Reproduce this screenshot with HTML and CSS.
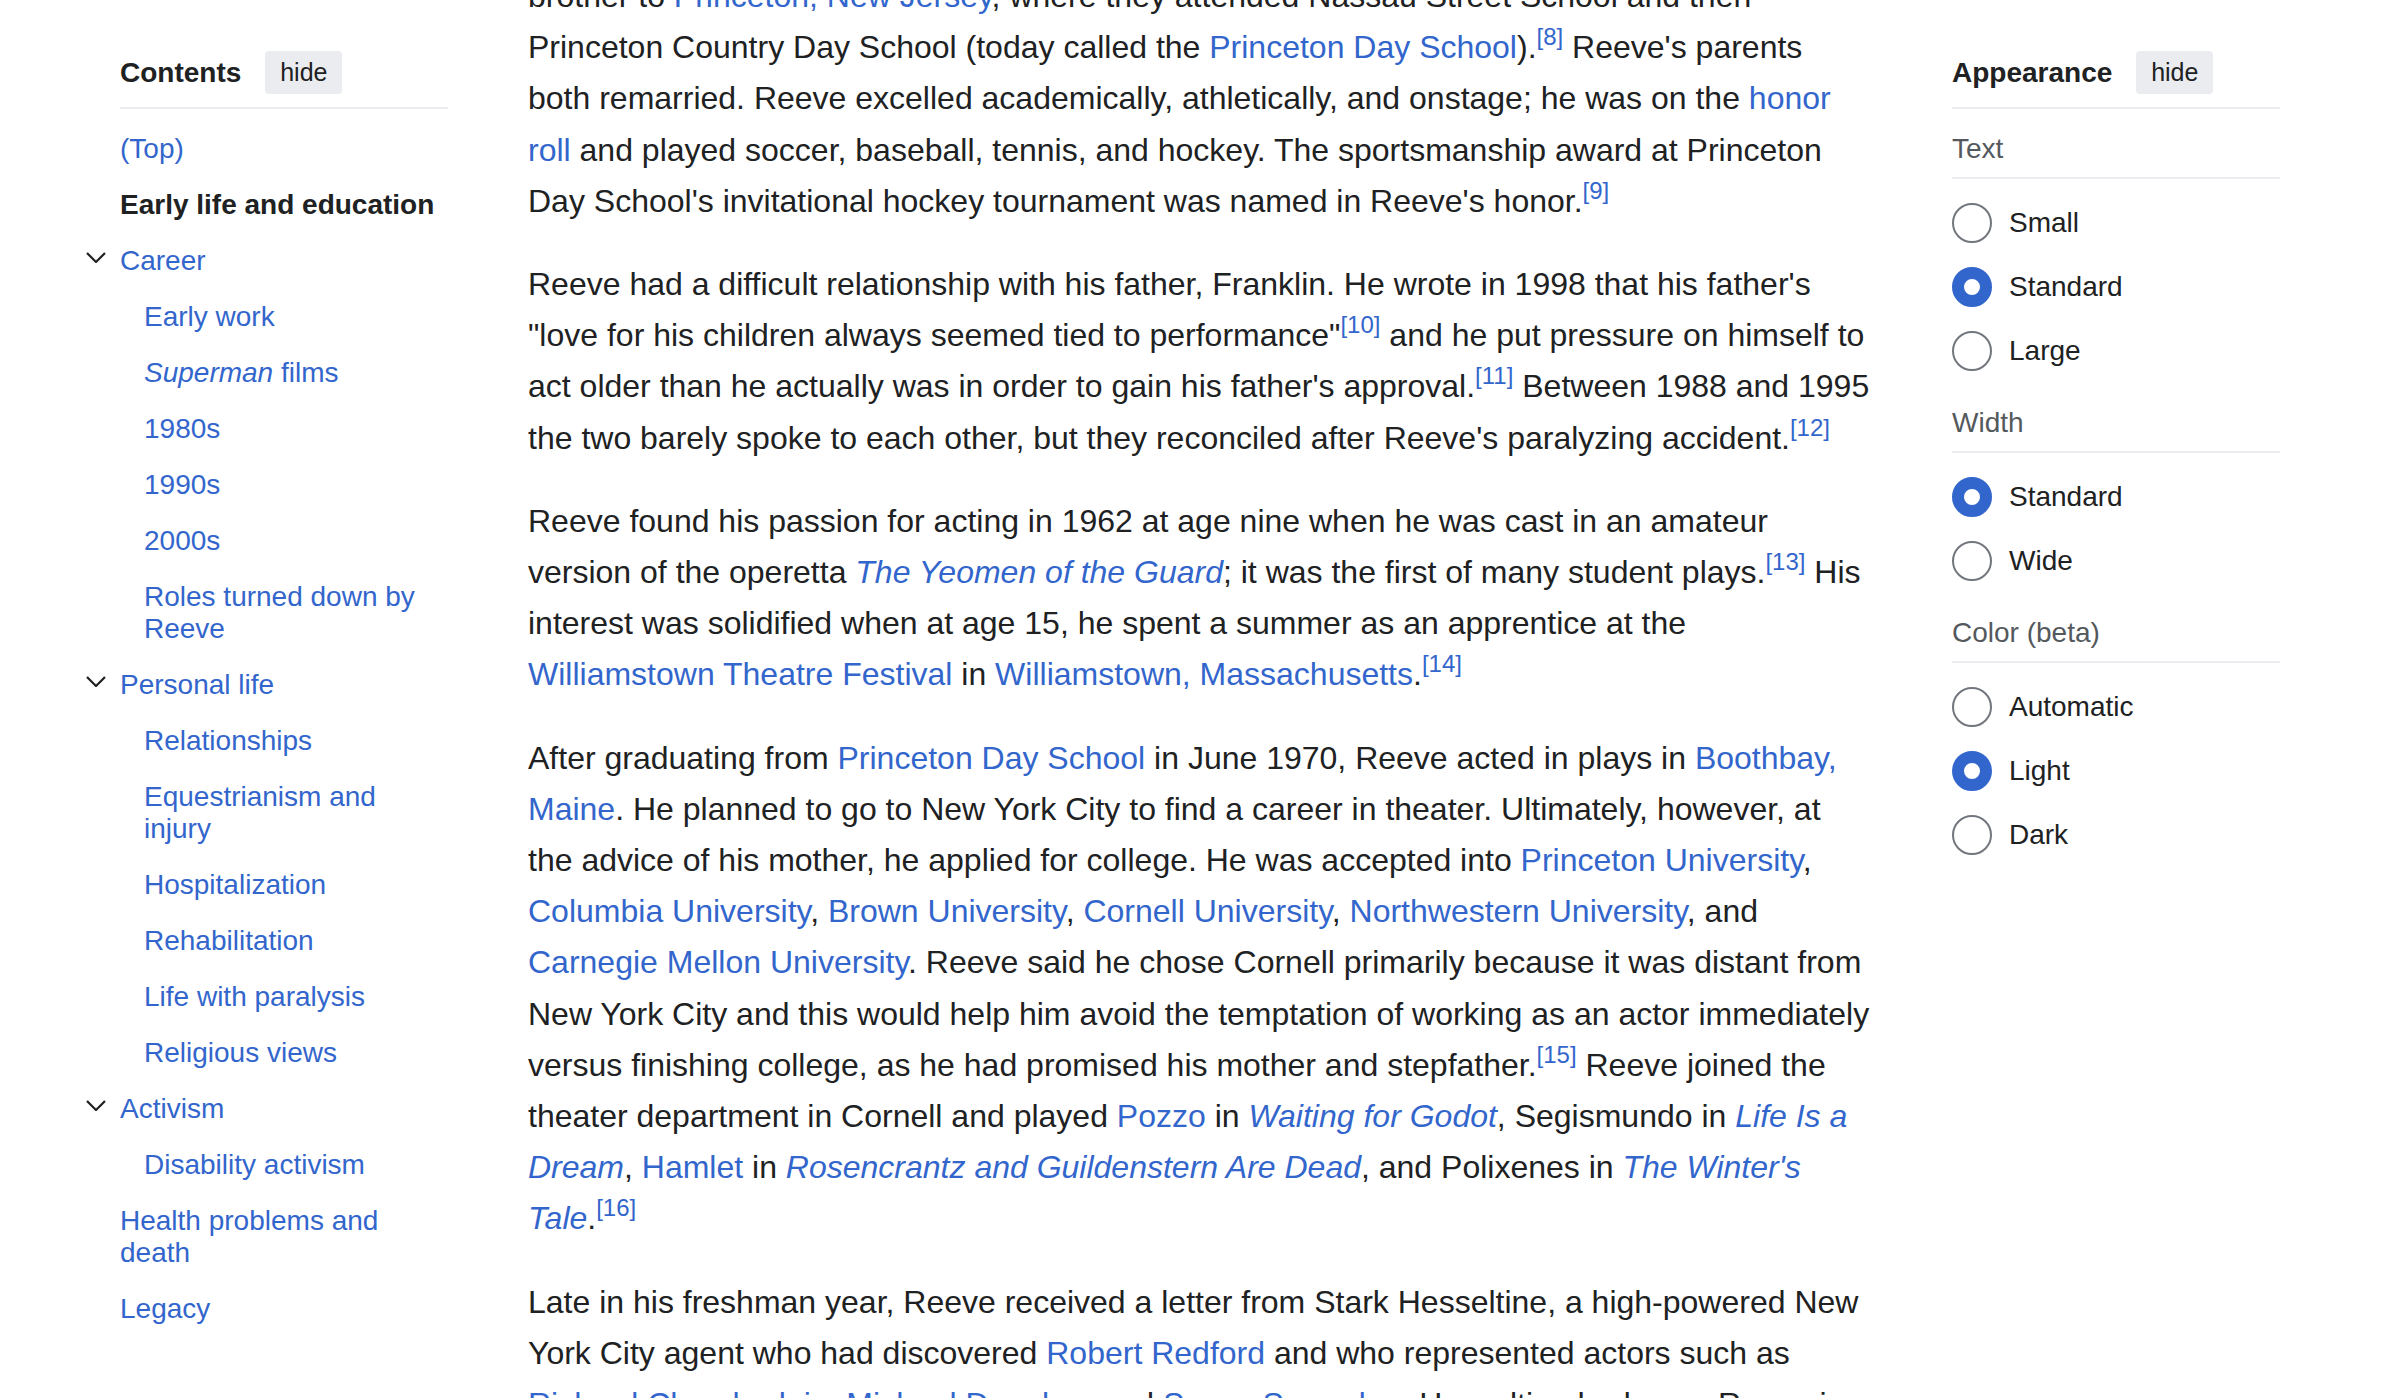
FILE: index.html
```html
<!DOCTYPE html>
<html lang="en">
<head>
<meta charset="utf-8">
<title>Christopher Reeve</title>
<link rel="stylesheet" href="styles.css">
</head>
<body>
<div class="page">
  <nav class="toc">
    <div class="panel-head">
      <span class="panel-title">Contents</span>
      <button class="hide-btn">hide</button>
    </div>
    <ul class="toc-list">
      <li class="toc-item"><a href="#">(Top)</a></li>
      <li class="toc-item active"><a href="#">Early life and education</a></li>
      <li class="toc-item has-sub">
        <svg class="chev" viewBox="0 0 20 11" width="20" height="11"><polyline points="1,1 10,10 19,1"/></svg>
        <a href="#">Career</a>
        <ul class="toc-sub">
          <li class="toc-item"><a href="#">Early work</a></li>
          <li class="toc-item"><a href="#"><i>Superman</i> films</a></li>
          <li class="toc-item"><a href="#">1980s</a></li>
          <li class="toc-item"><a href="#">1990s</a></li>
          <li class="toc-item"><a href="#">2000s</a></li>
          <li class="toc-item"><a href="#">Roles turned down by Reeve</a></li>
        </ul>
      </li>
      <li class="toc-item has-sub">
        <svg class="chev" viewBox="0 0 20 11" width="20" height="11"><polyline points="1,1 10,10 19,1"/></svg>
        <a href="#">Personal life</a>
        <ul class="toc-sub">
          <li class="toc-item"><a href="#">Relationships</a></li>
          <li class="toc-item"><a href="#">Equestrianism and injury</a></li>
          <li class="toc-item"><a href="#">Hospitalization</a></li>
          <li class="toc-item"><a href="#">Rehabilitation</a></li>
          <li class="toc-item"><a href="#">Life with paralysis</a></li>
          <li class="toc-item"><a href="#">Religious views</a></li>
        </ul>
      </li>
      <li class="toc-item has-sub">
        <svg class="chev" viewBox="0 0 20 11" width="20" height="11"><polyline points="1,1 10,10 19,1"/></svg>
        <a href="#">Activism</a>
        <ul class="toc-sub">
          <li class="toc-item"><a href="#">Disability activism</a></li>
        </ul>
      </li>
      <li class="toc-item"><a href="#">Health problems and death</a></li>
      <li class="toc-item"><a href="#">Legacy</a></li>
    </ul>
  </nav>

  <main class="article">
    <p>brother to <a href="#">Princeton, New Jersey</a>, where they attended Nassau Street School and then<br>
    Princeton Country Day School (today called the <a href="#">Princeton Day School</a>).<sup><a href="#">[8]</a></sup> Reeve's parents<br>
    both remarried. Reeve excelled academically, athletically, and onstage; he was on the <a href="#">honor<br>
    roll</a> and played soccer, baseball, tennis, and hockey. The sportsmanship award at Princeton<br>
    Day School's invitational hockey tournament was named in Reeve's honor.<sup><a href="#">[9]</a></sup></p>

    <p>Reeve had a difficult relationship with his father, Franklin. He wrote in 1998 that his father's<br>
    "love for his children always seemed tied to performance"<sup><a href="#">[10]</a></sup> and he put pressure on himself to<br>
    act older than he actually was in order to gain his father's approval.<sup><a href="#">[11]</a></sup> Between 1988 and 1995<br>
    the two barely spoke to each other, but they reconciled after Reeve's paralyzing accident.<sup><a href="#">[12]</a></sup></p>

    <p>Reeve found his passion for acting in 1962 at age nine when he was cast in an amateur<br>
    version of the operetta <a href="#"><i>The Yeomen of the Guard</i></a>; it was the first of many student plays.<sup><a href="#">[13]</a></sup> His<br>
    interest was solidified when at age 15, he spent a summer as an apprentice at the<br>
    <a href="#">Williamstown Theatre Festival</a> in <a href="#">Williamstown, Massachusetts</a>.<sup><a href="#">[14]</a></sup></p>

    <p>After graduating from <a href="#">Princeton Day School</a> in June 1970, Reeve acted in plays in <a href="#">Boothbay,<br>
    Maine</a>. He planned to go to New York City to find a career in theater. Ultimately, however, at<br>
    the advice of his mother, he applied for college. He was accepted into <a href="#">Princeton University</a>,<br>
    <a href="#">Columbia University</a>, <a href="#">Brown University</a>, <a href="#">Cornell University</a>, <a href="#">Northwestern University</a>, and<br>
    <a href="#">Carnegie Mellon University</a>. Reeve said he chose Cornell primarily because it was distant from<br>
    New York City and this would help him avoid the temptation of working as an actor immediately<br>
    versus finishing college, as he had promised his mother and stepfather.<sup><a href="#">[15]</a></sup> Reeve joined the<br>
    theater department in Cornell and played <a href="#">Pozzo</a> in <a href="#"><i>Waiting for Godot</i></a>, Segismundo in <a href="#"><i>Life Is a<br>
    Dream</i></a>, <a href="#">Hamlet</a> in <a href="#"><i>Rosencrantz and Guildenstern Are Dead</i></a>, and Polixenes in <a href="#"><i>The Winter's<br>
    Tale</i></a>.<sup><a href="#">[16]</a></sup></p>

    <p>Late in his freshman year, Reeve received a letter from Stark Hesseltine, a high-powered New<br>
    York City agent who had discovered <a href="#">Robert Redford</a> and who represented actors such as<br>
    <a href="#">Richard Chamberlain</a>, <a href="#">Michael Douglas</a>, and <a href="#">Susan Sarandon</a>. Hesseltine had seen Reeve in</p>
  </main>

  <aside class="appearance">
    <div class="panel-head">
      <span class="panel-title">Appearance</span>
      <button class="hide-btn">hide</button>
    </div>
    <section class="app-group">
      <div class="app-label">Text</div>
      <ul class="radio-list">
        <li class="radio-row"><span class="radio"></span><span class="radio-text">Small</span></li>
        <li class="radio-row"><span class="radio checked"></span><span class="radio-text">Standard</span></li>
        <li class="radio-row"><span class="radio"></span><span class="radio-text">Large</span></li>
      </ul>
    </section>
    <section class="app-group">
      <div class="app-label">Width</div>
      <ul class="radio-list">
        <li class="radio-row"><span class="radio checked"></span><span class="radio-text">Standard</span></li>
        <li class="radio-row"><span class="radio"></span><span class="radio-text">Wide</span></li>
      </ul>
    </section>
    <section class="app-group">
      <div class="app-label">Color (beta)</div>
      <ul class="radio-list">
        <li class="radio-row"><span class="radio"></span><span class="radio-text">Automatic</span></li>
        <li class="radio-row"><span class="radio checked"></span><span class="radio-text">Light</span></li>
        <li class="radio-row"><span class="radio"></span><span class="radio-text">Dark</span></li>
      </ul>
    </section>
  </aside>
</div>
</body>
</html>
```

FILE: styles.css
```css
html, body {
  margin: 0;
  padding: 0;
  overflow: hidden;
  background: #ffffff;
}

body {
  font-family: "Liberation Sans", Arial, Helvetica, sans-serif;
  color: #202122;
}

a {
  color: #3366cc;
  text-decoration: none;
}

ul {
  list-style: none;
  margin: 0;
  padding: 0;
}

.page {
  display: grid;
  grid-template-columns: 328px 1362px 328px;
  column-gap: 71px;
  padding-left: 120px;
  align-items: start;
  height: 1398px;
}

/* Panel headers (Contents / Appearance) */
.panel-head {
  display: flex;
  align-items: center;
  height: 43px;
  margin-top: 51px;
  padding-bottom: 13px;
  border-bottom: 2px solid #eaecf0;
}

.panel-title {
  font-size: 28px;
  font-weight: bold;
  margin-right: 24px;
}

.hide-btn {
  font-family: "Liberation Sans", Arial, Helvetica, sans-serif;
  font-size: 25px;
  color: #202122;
  background: #eaecf0;
  border: none;
  border-radius: 4px;
  width: 77px;
  height: 43px;
  padding: 0;
}

/* Table of contents */
.toc-list {
  margin-top: 12px;
  font-size: 28px;
}

.toc-item {
  position: relative;
}

.toc-item > a {
  display: block;
  padding: 12px 0;
  line-height: 32px;
}

.toc-item.active > a {
  color: #202122;
  font-weight: bold;
}

.toc-sub {
  padding-left: 24px;
}

.chev {
  position: absolute;
  left: -34px;
  top: 19px;
  fill: none;
  stroke: #202122;
  stroke-width: 2.2;
}

/* Article */
.article {
  margin-top: -29px;
  margin-left: 9px;
  font-size: 32px;
  line-height: 51.2px;
}

.article p {
  margin: 0 0 32px 0;
  white-space: nowrap;
}

.article sup {
  font-size: 24px;
  line-height: 0;
  vertical-align: 13px;
}

/* Appearance panel */
.app-label {
  color: #54595d;
  font-size: 28px;
  line-height: 32px;
  padding: 24px 0 12px;
  border-bottom: 2px solid #eaecf0;
}

.radio-list {
  margin-top: 12px;
}

.radio-row {
  display: flex;
  align-items: center;
  height: 64px;
}

.radio {
  box-sizing: border-box;
  width: 40px;
  height: 40px;
  border-radius: 50%;
  border: 2px solid #72777d;
  background: #ffffff;
  flex: none;
}

.radio.checked {
  border: 12px solid #3366cc;
}

.radio-text {
  font-size: 28px;
  margin-left: 17px;
}
```
